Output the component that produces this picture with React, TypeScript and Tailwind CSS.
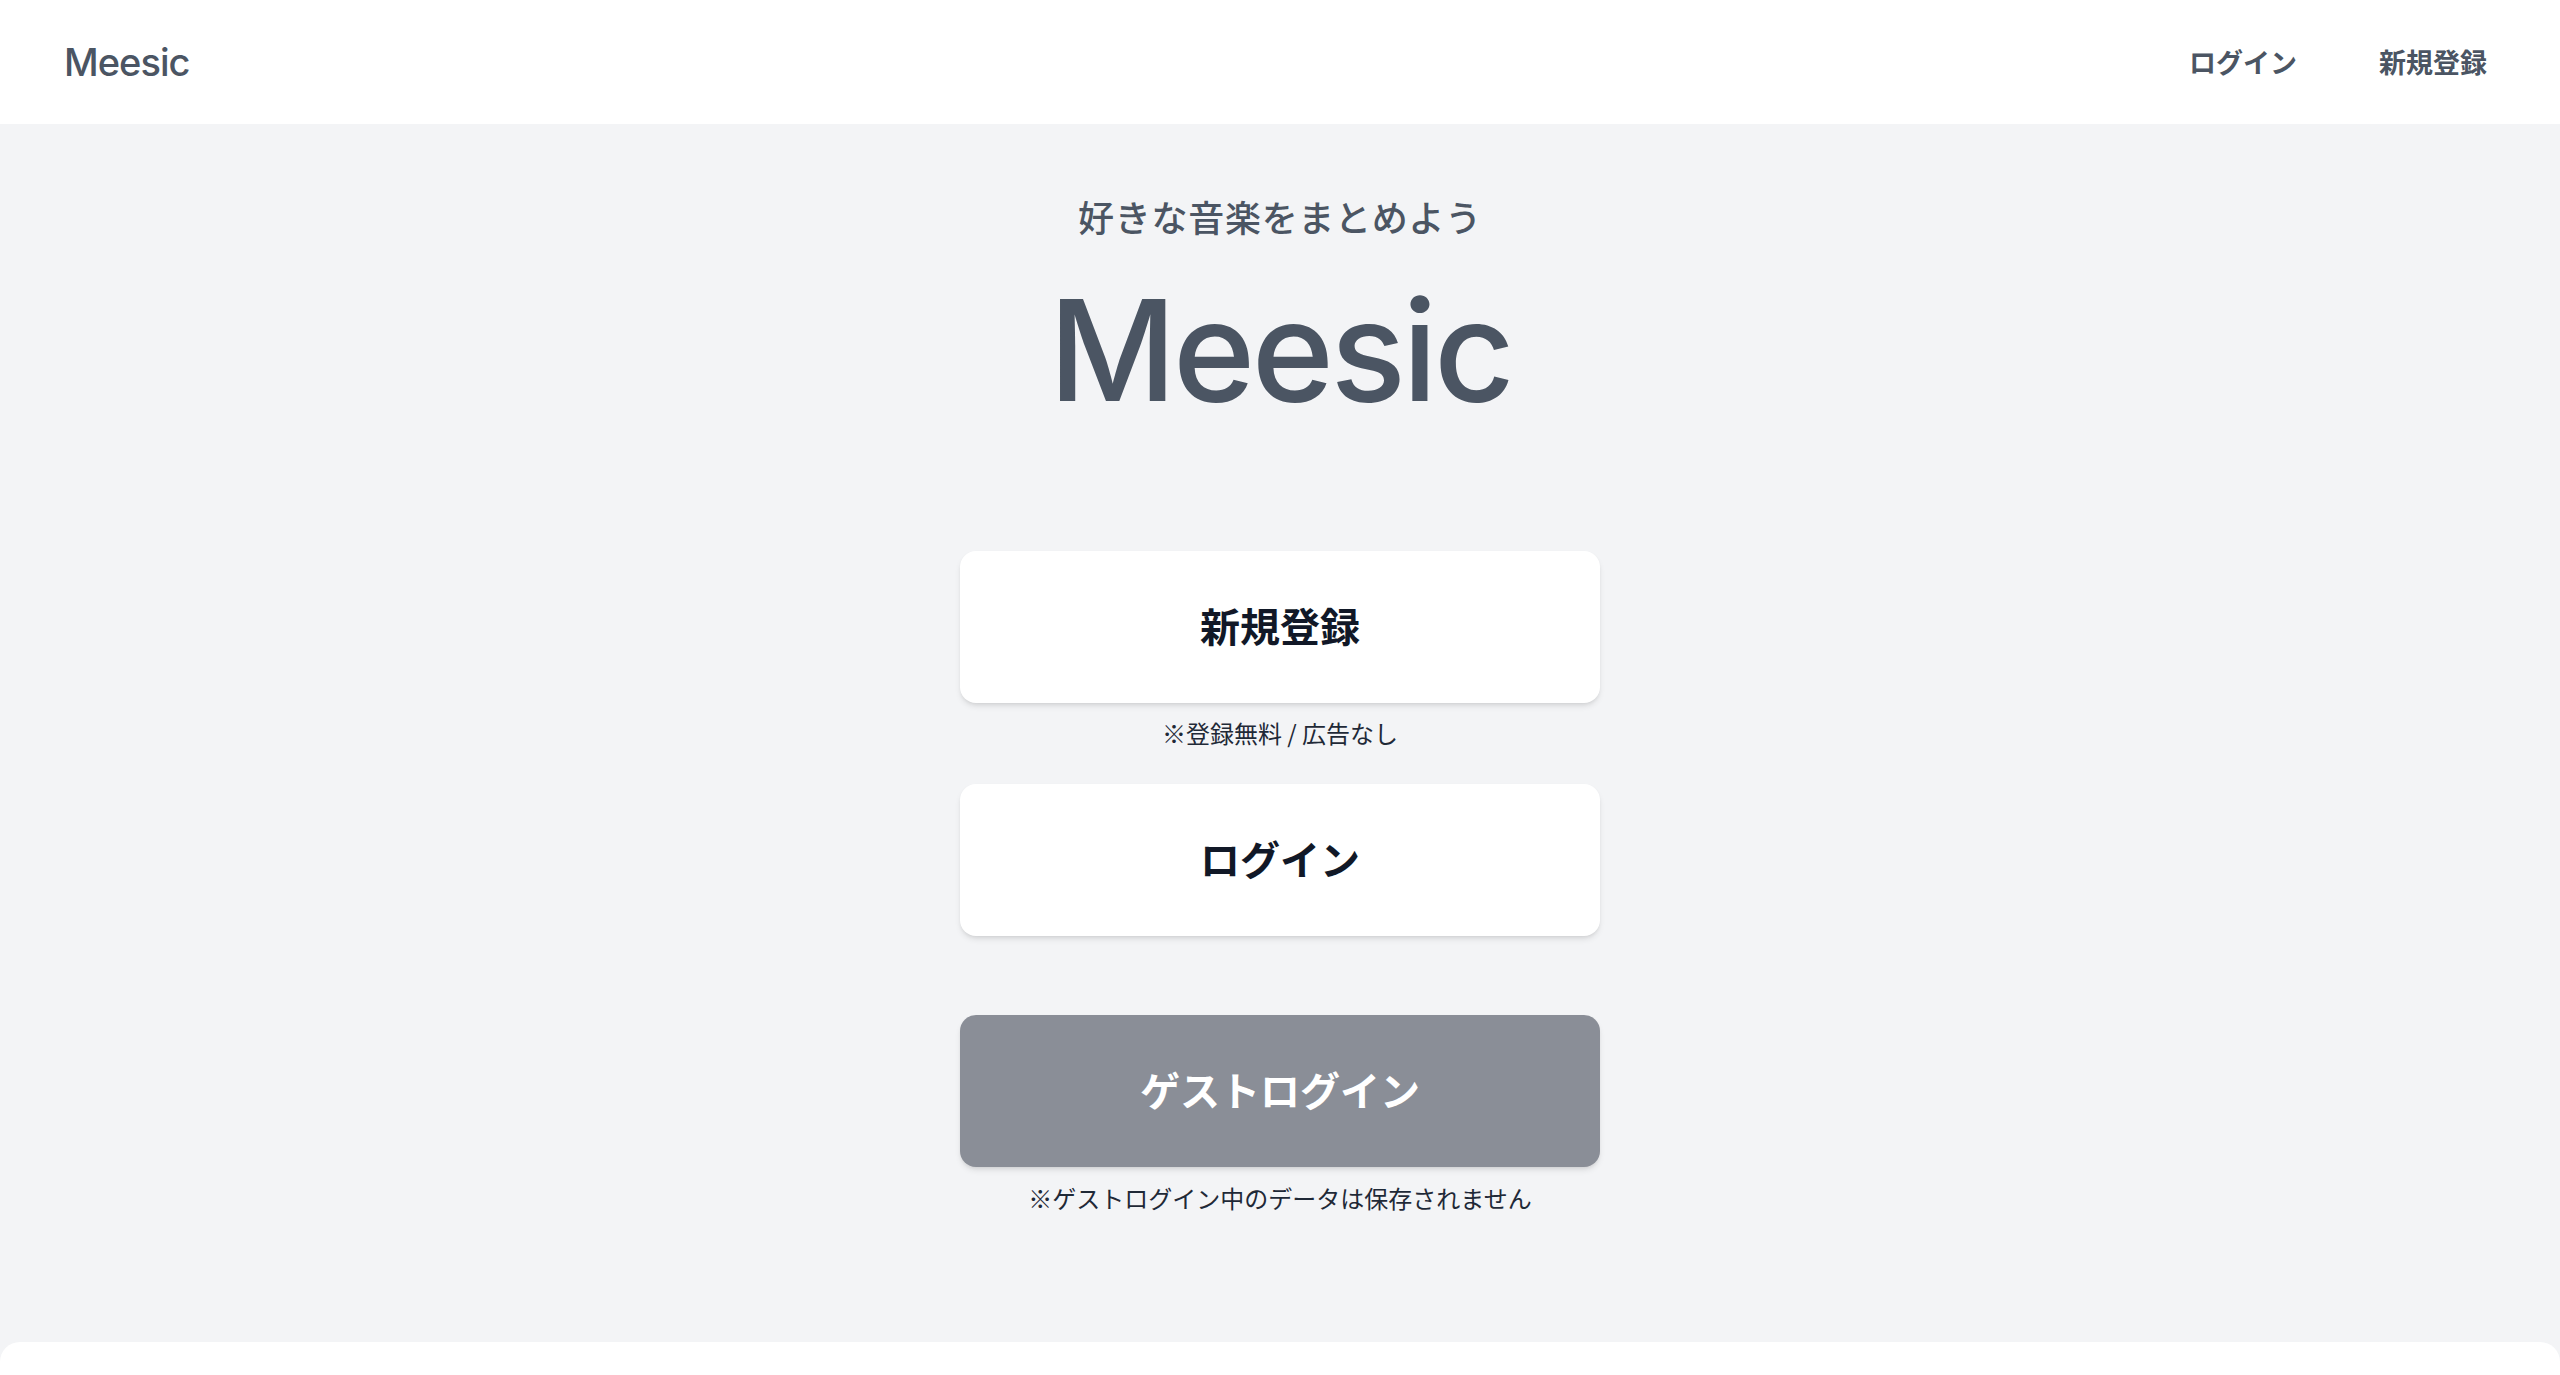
import React from "react";

const jp = { fontFamily: '"Noto Sans CJK JP", "Noto Sans", sans-serif' };
const latin = { fontFamily: 'Inter, "Noto Sans", sans-serif' };

export default function App() {
  return (
    <div className="min-h-screen bg-[#f3f4f6]" style={jp}>
      <header className="flex h-[124px] items-center justify-between bg-white pl-[64px] pr-[73px]">
        <div className="text-[38px] font-medium tracking-tight text-[#4b5563]" style={latin}>
          Meesic
        </div>
        <nav className="flex items-center gap-[82px] text-[27px] font-semibold text-[#4b5563]">
          <a>ログイン</a>
          <a>新規登録</a>
        </nav>
      </header>

      <main className="flex flex-col items-center pt-[72px] pb-[130px]">
        <p className="text-[36px] leading-[40px] font-medium tracking-[0.02em] text-[#4b5563]">
          好きな音楽をまとめよう
        </p>
        <h1
          className="mt-[44px] text-[140px] leading-none font-medium tracking-tight text-[#4b5563]"
          style={latin}
        >
          Meesic
        </h1>

        <button className="mt-[131px] flex h-[152px] w-[640px] items-center justify-center rounded-2xl bg-white pb-[4px] text-[40px] font-bold text-[#111827] shadow-md">
          新規登録
        </button>
        <p className="mt-[16px] text-[24px] leading-[28px] text-[#1f2937]">※登録無料 / 広告なし</p>

        <button className="mt-[37px] flex h-[152px] w-[640px] items-center justify-center rounded-2xl bg-white pb-[4px] text-[40px] font-bold text-[#111827] shadow-md">
          ログイン
        </button>

        <button className="mt-[79px] flex h-[152px] w-[640px] items-center justify-center rounded-2xl bg-[#8a8e97] pb-[4px] text-[40px] font-bold text-white shadow-md">
          ゲストログイン
        </button>
        <p className="mt-[17px] text-[24px] leading-[28px] text-[#1f2937]">
          ※ゲストログイン中のデータは保存されません
        </p>
      </main>

      <footer className="h-[240px] rounded-t-[20px] bg-white"></footer>
    </div>
  );
}
